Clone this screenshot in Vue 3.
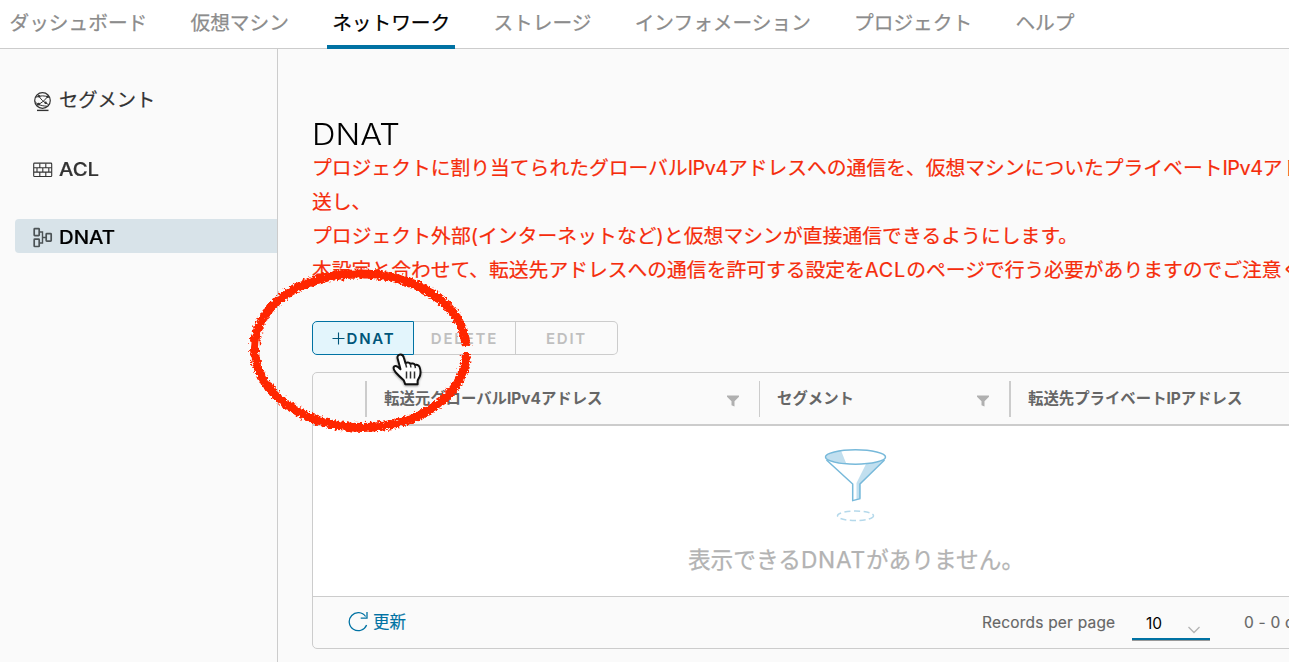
<script setup>
const tabs = [
  { label: 'ダッシュボード' },
  { label: '仮想マシン' },
  { label: 'ネットワーク', active: true },
  { label: 'ストレージ' },
  { label: 'インフォメーション' },
  { label: 'プロジェクト' },
  { label: 'ヘルプ' },
]
</script>

<template>
  <div class="app">
    <header class="tabs">
      <a v-for="t in tabs" :key="t.label" class="tab" :class="{ active: t.active }">{{ t.label }}</a>
    </header>
    <div class="body">
      <nav class="side">
        <a class="item">
          <svg class="ico globe" viewBox="0 0 20 22" fill="none" stroke="#333" stroke-width="1.2">
            <circle cx="9.5" cy="9.5" r="7.8" />
            <path d="M3.200 6.200C7 4.400 12 4.400 16 6.200M5.600 4.400C7.200 8 11 11.500 15.600 13.600M15.200 5C12.500 8.800 8 12.500 4 14.200M2 10.500C3.500 13 8 15 14 15.200" stroke-width="1" />
            <path d="M4 19.400h11.500" stroke-width="1.4" />
            <g fill="#333" stroke="none"><circle cx="6" cy="5.2" r="1.2" /><circle cx="14.6" cy="5.8" r="1.2" /><circle cx="5.6" cy="13.2" r="1.4" /><circle cx="12.6" cy="11.8" r="1.2" /></g>
          </svg>
          <span>セグメント</span>
        </a>
        <a class="item acl">
          <svg class="ico" viewBox="0 0 20 22" fill="none" stroke="#333" stroke-width="1.1">
            <rect x=".7" y="4.1" width="18" height="13.4" rx=".8" />
            <path d="M1 8.700h17.600M1 13.100h17.600M6.800 4.500v4M12.800 4.500v4M4 9v4M9.800 9v4M15.800 9v4M6.800 13.500v4M12.800 13.500v4" />
          </svg>
          <span class="caps">ACL</span>
        </a>
        <a class="item selected">
          <svg class="ico" viewBox="0 0 20 22" fill="none" stroke="#4c5356" stroke-width="1.7">
            <rect x="1.2" y="1.7" width="5" height="7" rx=".6" />
            <rect x="1.2" y="12.1" width="5" height="7.4" rx=".6" />
            <rect x="13.2" y="6.7" width="5" height="7.4" rx=".6" />
            <path d="M6.400 5h3.100v11H6.400M9.500 10.500h3.500" stroke-width="1.4" />
          </svg>
          <span class="caps">DNAT</span>
        </a>
      </nav>

      <main class="main">
        <h1>DNAT</h1>
        <p class="note">
          <span>プロジェクトに割り当てられたグローバル<i class="ip">IPv4</i>アドレスへの通信を、仮想マシンについたプライベート<i class="ip">IPv4</i>アド</span>
          <span>送し、</span>
          <span class="wide">プロジェクト外部(インターネットなど)と仮想マシンが直接通信できるようにします。</span>
          <span>本設定と合わせて、転送先アドレスへの通信を許可する設定を<i class="acl-word">ACL</i>のページで行う必要がありますのでご注意く</span>
        </p>

        <div class="buttons">
          <button class="btn primary">
            <svg width="13" height="13" viewBox="0 0 13 13"><path d="M6.5 .5v12M.5 6.5h12" stroke="#00567a" stroke-width="1.1" /></svg><span>DNAT</span>
          </button>
          <button class="btn">DELETE</button>
          <button class="btn last">EDIT</button>
        </div>

        <section class="grid">
          <div class="head">
            <div class="cell check"></div>
            <div class="cell c1"><b>転送元グローバルIPv4アドレス</b>
              <svg class="flt" viewBox="0 0 12 12"><path d="M0 .5h12v1.2L7.5 6.2v5.3l-3-1.2V6.2L0 1.7z" fill="#b0b0b0" /></svg></div>
            <div class="cell c2"><b>セグメント</b>
              <svg class="flt" viewBox="0 0 12 12"><path d="M0 .5h12v1.2L7.5 6.2v5.3l-3-1.2V6.2L0 1.7z" fill="#b0b0b0" /></svg></div>
            <div class="cell c3"><b>転送先プライベートIPアドレス</b></div>
          </div>
          <div class="empty">
            <svg width="64" height="76" viewBox="0 0 64 76" fill="none">
              <path d="M2 10C2 6 10 3.5 17 2.5L22 15C14 14 3 13 2 10z" fill="#c1dfef" />
              <path d="M42 16C50 15.2 57 14 61 11L36.5 36.5V50L32.5 51V35z" fill="#c1dfef" />
              <ellipse cx="31.5" cy="9" rx="30" ry="7.2" stroke="#77b9da" stroke-width="1.5" />
              <path d="M2.5 12L28.7 36v16.6l7.2-2V36L60.5 12" stroke="#77b9da" stroke-width="1.5" />
              <ellipse cx="31.5" cy="67.8" rx="18" ry="4.8" stroke="#b5d9eb" stroke-width="1.5" stroke-dasharray="6 3.4" />
            </svg>
            <p>表示できる<i>DNAT</i>がありません。</p>
          </div>
          <footer class="foot">
            <a class="refresh">
              <svg width="21" height="21" viewBox="0 0 21 21" fill="none" stroke="#0072a3" stroke-width="1.3"><path d="M18.6 14A9 9 0 1 1 17.6 5.5M19 1v6.2h-6.3" /></svg>
              <span>更新</span>
            </a>
            <span class="rpp">Records per page</span>
            <span class="select"><span>10</span>
              <svg width="12" height="8" viewBox="0 0 12 8"><path d="M.5 1l5.5 5.5L11.5 1" fill="none" stroke="#b3b3b3" stroke-width="1.3" /></svg>
            </span>
            <span class="count">0 - 0 o</span>
          </footer>
        </section>
      </main>
    </div>

    <svg class="ring" width="250" height="190" viewBox="240 255 250 190" fill="none">
      <filter id="rough" x="-10%" y="-10%" width="120%" height="120%">
        <feTurbulence type="fractalNoise" baseFrequency=".4" numOctaves="2" seed="4" />
        <feDisplacementMap in="SourceGraphic" scale="7" xChannelSelector="R" yChannelSelector="G" />
        <feGaussianBlur stdDeviation=".4" />
      </filter>
      <path filter="url(#rough)" d="M466 346C463 304 416 274 359 274C300 274 254.500 306 254.500 349C254.500 392 304 427.500 362 427.500C420 427.500 466 394 466.500 353" stroke="#ff2600" stroke-width="9" />
    </svg>
    <svg class="hand" width="36" height="38" viewBox="0 0 36 38">
      <path d="M8.4 2.500c2.200 0 3.100 1.500 3.600 3.600l1.600 5.400c.5-1.400 4.200-1.400 4.800.5.900-1 4-.7 4.600 1.200 1-1 3.700-.3 4.500 1.800.8 2 1.300 5.200.7 8-.4 2.300-2.400 4-2.600 6.200v3H13.200l-1.500-4C9 25.800 6.500 23.500 3.800 20.500c-1.500-1.800-3-4.500-1.600-6 1.700-1.600 4.300.6 6.300 2.700L5.600 6.500c-.6-2 .8-4 2.800-4z" fill="#fff" stroke="#111" stroke-width="2" stroke-linejoin="round" />
      <path d="M14.500 19.500v7M18.500 19.500v7M22.500 19.500v7M13.600 11.500l1 4M18.400 12l.5 3.500M23 13.200l.4 3" stroke="#333" stroke-width="1.500" />
    </svg>
  </div>
</template>

<style>
body { overflow: hidden; }
</style>

<style scoped>
* { box-sizing: border-box; }
.app { position: relative; width: 1289px; height: 662px; overflow: hidden; background: #fafafa; color: #000; font-family: Inter, "Noto Sans CJK JP", sans-serif; font-size: 20px; white-space: nowrap; }
i { font-style: normal; }
.tabs { display: flex; gap: 33.2px; height: 49px; padding-left: 4.5px; background: #fff; border-bottom: 1px solid #ccc; }
.tab { height: 49px; padding: 0 5px; line-height: 46px; font-size: 19.7px; color: #8c8c8c; border-bottom: 4px solid transparent; -webkit-text-stroke: .25px; }
.tab.active { color: #000; border-color: #0072a3; }
.body { display: flex; height: 613px; }
.side { width: 278px; flex: none; border-right: 1px solid #ccc; padding: 33px 0 0 15px; display: flex; flex-direction: column; gap: 35px; }
.item { display: flex; height: 34px; align-items: center; padding-left: 18px; gap: 6px; color: #333; font-size: 19.3px; line-height: 34px; border-radius: 4px 0 0 4px; -webkit-text-stroke: .2px; }
.item:first-child span { position: relative; top: 1px; }
.item .caps { font-size: 18.5px; font-weight: 500; display: inline-block; transform: scaleX(1.1); transform-origin: left; position: relative; top: 1px; }
.item.selected { background: #d8e3e9; color: #000; }
.acl { margin-bottom: -1px; }
.ico { width: 20px; height: 22px; position: relative; top: 2px; }
.ico.globe { top: 3px; }
.main { flex: 1; min-width: 0; overflow: hidden; padding: 67px 0 0 34px; }
h1 { margin: 0; font-size: 30px; line-height: 36px; height: 35px; font-weight: 300; transform: scaleX(1.085); transform-origin: left; }
.note { margin: 0; display: flex; flex-direction: column; color: #f52c0b; font-size: 19.8px; line-height: 35px; -webkit-text-stroke: .2px; }
.note span { height: 34px; }
.wide { letter-spacing: .06px; }
.ip { letter-spacing: -.4px; }
.acl-word { letter-spacing: .9px; }
.buttons { display: flex; margin-top: 34px; height: 34px; }
.btn { width: 102px; height: 34px; padding: 0; border: 1px solid #ccc; border-left: 0; background: transparent; font: 600 15px Inter, sans-serif; letter-spacing: 1.8px; color: #bfbfbf; }
.btn.primary { display: flex; align-items: center; justify-content: center; gap: 2px; border: 1px solid #0072a3; border-radius: 5px 0 0 5px; background: #e3f5fc; color: #00567a; padding-left: 1px; }
.btn.last { border-radius: 0 5px 5px 0; }
.grid { margin-top: 17px; width: 1100px; border: 1px solid #ccc; border-radius: 5px; height: 277px; }
.head { display: flex; height: 53px; align-items: center; border-bottom: 2px solid #ccc; }
.cell { display: flex; align-items: center; height: 36px; color: #666; font-size: 15.4px; }
.cell b { font-weight: 700; position: relative; top: -2px; }
.check { width: 54px; border-right: 2px solid #ccc; }
.c1 { width: 393px; border-right: 1px solid #ccc; padding: 0 20px 0 17px; justify-content: space-between; }
.c2 { width: 251px; border-right: 2px solid #ccc; padding: 0 20px 0 17px; justify-content: space-between; }
.c3 { padding-left: 17px; }
.flt { width: 12px; height: 12px; position: relative; top: 2px; }
.empty { height: 170px; background: #fff; display: flex; flex-direction: column; align-items: center; padding: 22px 12px 0 0; }
.empty p { margin: 17px 0 0; font-size: 22.7px; line-height: 38px; color: #b3b3b3; -webkit-text-stroke: .25px; }
.empty i { letter-spacing: .8px; }
.foot { display: flex; align-items: center; height: 51px; border-top: 1px solid #ccc; font-size: 15.5px; color: #666; }
.refresh { display: flex; align-items: center; gap: 4px; width: 635px; padding-left: 35px; margin-top: -2px; color: #0072a3; font-size: 16.5px; -webkit-text-stroke: .15px; }
.rpp, .count { letter-spacing: .2px; -webkit-text-stroke: .15px; }
.rpp { width: 184px; padding-left: 34px; }
.select { width: 78px; height: 29px; margin-top: 7px; border-bottom: 2px solid #0072a3; box-shadow: 0 1px #9a9a9a; display: flex; align-items: center; justify-content: space-between; padding: 0 10px 2px 14px; color: #000; }
.select svg { position: relative; top: 6px; }
.count { padding-left: 34px; }
.ring { position: absolute; left: 240px; top: 255px; }
.hand { position: absolute; left: 392px; top: 352px; filter: drop-shadow(0 1px 1px #0006); }
</style>
